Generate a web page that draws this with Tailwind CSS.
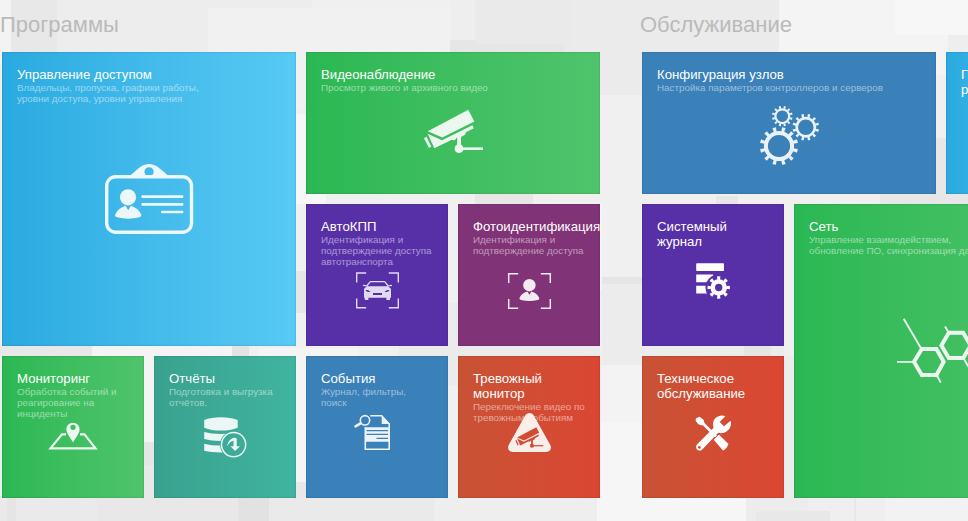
<!DOCTYPE html>
<html lang="ru">
<head>
<meta charset="utf-8">
<title>Программы</title>
<script src="https://cdn.jsdelivr.net/npm/@tailwindcss/browser@4"></script>
</head>
<body class="w-[968px] h-[521px] overflow-hidden bg-[#f0f0f0] font-['Liberation_Sans',Arial,sans-serif] text-white">
<div class="relative isolate w-[968px] h-[521px] overflow-hidden">
<!-- patchwork backdrop -->
<svg class="absolute inset-0 -z-10" width="968" height="521" shape-rendering="crispEdges">
<path fill="#f3f3f3" d="M0 0h11v64H0z"/><path fill="#e8e8e8" d="M11 0h46v60H11z"/><path fill="#ededed" d="M57 0h151v60H57zM208 0h104v8H208z"/><path fill="#f1f1f1" d="M208 8h242v100H208z"/>
<path fill="#eeeeee" d="M450 0h25v40h-25z"/><path fill="#eaeaea" d="M475 0h95v52h-95z"/><path fill="#e6e6e6" d="M450 40h26v4h88v8H450z"/><path fill="#ebebeb" d="M570 0h209v52H642v43h-72z"/>
<path fill="#f4f4f4" d="M779 0h189v75H779z"/><path fill="#f7f7f7" d="M895 0h73v35h-73z"/><path fill="#eeeeee" d="M948 35h20v17h-20z"/>
<path fill="#f7f7f7" d="M296 114h10v56h-10zM296 170h30v34h-30z"/><path fill="#e6e6e6" d="M296 271h10v42h-10z"/>
<path fill="#e7e7e7" d="M475 194h58v10h-58zM716 196h22v8h-22zM880 138h88v66h-88z"/>
<path fill="#e5e5e5" d="M602 277h40v7h-40z"/><path fill="#ececec" d="M602 284h182v81H602z"/><path fill="#f6f6f6" d="M600 422h42v99h-42zM600 204h2v86h-2z"/><path fill="#f3f3f3" d="M600 365h42v57h-42z"/>
<path fill="#e8e8e8" d="M0 346h92v10H0z"/><path fill="#f4f4f4" d="M92 346h140v96H92zM258 348h101v8h-101zM296 356h10v126h-10z"/><path fill="#e3e3e3" d="M232 346h17v10h-17z"/>
<path fill="#ebebeb" d="M448 302h10v44h142v10H399v-10h49zM448 356h10v30h-10z"/><path fill="#e5e5e5" d="M744 346h27v10h-27zM144 442h10v23h-10z"/><path fill="#e8e8e8" d="M144 465h10v33h-10zM296 482h10v16h-10z"/>
<path fill="#ececec" d="M784 356h10v142h-10z"/>
<path fill="#eaeaea" d="M0 498h97v23H0z"/><path fill="#e5e5e5" d="M7 498h9v23H7z"/><path fill="#e8e8e8" d="M97 498h141v23H97z"/><path fill="#e2e2e2" d="M238 498h31v23h-31z"/><path fill="#eaeaea" d="M269 498h165v23H269z"/><path fill="#eeeeee" d="M434 498h163v23H434z"/>
<path fill="#f6f6f6" d="M597 498h149v23H597z"/><path fill="#ececec" d="M746 498h62v23h-62z"/><path fill="#efefef" d="M808 498h77v23h-77z"/><path fill="#e8e8e8" d="M756 511h74v10h-74zM854 498h2v23h-2z"/><path fill="#f2f2f2" d="M885 498h83v23h-83z"/>
</svg>
<svg class="hidden">
<defs>
<g id="camera"><path d="M427.7 131.3 468.3 109.7 474.3 121.5 442.3 137.5z"/><path d="M427.7 133.7 442 140.3 472.5 125.3 473.8 128.2 466 132.2 465 134.8 461 137v9h-3.8v-8.7l-2.4 3-3.5-.4L434.3 148.3z"/><path d="M424 138.2 426.5 136.8 431.3 146.6 429 148z"/><circle cx="459" cy="148.7" r="4.4"/><path d="M460 147.4h23v2.6h-23z"/></g>
</defs>
</svg>
<main class="flex gap-[40px] pl-0.5">
<section class="flex flex-col w-[600px] shrink-0">
<h2 class="h-[52px] pt-3 -ml-0.5 text-[22px] leading-[26px] text-[#bababa]">Программы</h2>
<div class="grid grid-cols-[repeat(4,142px)] grid-rows-[repeat(3,142px)] gap-[10px]">

<article class="col-span-2 row-span-2 grid overflow-hidden bg-linear-to-r from-[#29aae0] to-[#57caf5] shadow-[inset_0_0_2px_rgba(0,0,0,0.25)]">
<div class="col-start-1 row-start-1 p-[15px]"><h3 class="text-[13.2px] leading-[15px]">Управление доступом</h3><p class="text-[9.87px] leading-[11px] text-white/50">Владельцы, пропуска, графики работы,<br>уровни доступа, уровни управления</p></div>
<svg class="col-start-1 row-start-1" width="294" height="294" viewBox="2 52 294 294" fill="#fff" opacity=".9"><rect x="106.7" y="176.7" width="84.8" height="55.6" rx="9" fill="none" stroke="#fff" stroke-width="3.4"/><path fill-rule="evenodd" d="M128.5 176.500c4-2 7-6 12-9.700 6-3.800 11-3.800 17 0 5 3.700 8 6.700 11.500 9.700zM149 167.200a4.600 4.600 0 1 0 .1 0z"/><circle cx="128" cy="197.300" r="8.100"/><path d="M125.500 205.800l2.800 4.500 2.500-4.500c5 1.500 8.500 4.500 10.400 8.800.5 1.500-.5 2.200-2 2.600-7 1.900-15 1.900-22 0-1.700-.4-2.600-1.300-2-2.600 2-4.300 5.600-7.300 10.300-8.800z"/><path d="M142.600 196.700h39.500M142.600 204.400h39.500M162.300 212h19.800" stroke="#fff" stroke-width="2.700" stroke-linecap="round"/></svg>
</article>

<article class="col-span-2 grid overflow-hidden bg-linear-to-r from-[#2ab853] to-[#4fc46c] shadow-[inset_0_0_2px_rgba(0,0,0,0.25)]">
<div class="col-start-1 row-start-1 p-[15px]"><h3 class="text-[13.2px] leading-[15px]">Видеонаблюдение</h3><p class="text-[9.87px] leading-[11px] text-white/50">Просмотр живого и архивного видео</p></div>
<svg class="col-start-1 row-start-1" width="294" height="142" viewBox="306 52 294 142" fill="#fff" opacity=".9"><use href="#camera"/></svg>
</article>

<article class="grid overflow-hidden bg-[#5730a8] shadow-[inset_0_0_2px_rgba(0,0,0,0.25)]">
<div class="col-start-1 row-start-1 p-[15px] whitespace-nowrap"><h3 class="text-[13.2px] leading-[15px]">АвтоКПП</h3><p class="text-[9.87px] leading-[11px] text-white/50">Идентификация и<br>подтверждение доступа<br>автотранспорта</p></div>
<svg class="col-start-1 row-start-1" width="142" height="142" viewBox="306 204 142 142" fill="#fff" opacity=".82"><path d="M356.700 282.500v-9.500h9.500M388.800 273h9.500v9.500M398.300 298.500v9.200h-9.500M366.200 307.700h-9.500v-9.200" fill="none" stroke="#fff" stroke-width="1.400"/><path fill-rule="evenodd" d="M364 289.500c0-1.500 2-2.500 3-3l-4-.6c-.6-1.200 1.700-1.400 3.200-.4l3-3.600c.5-.7 1-.9 2-.9h12.600c1 0 1.500.2 2 .9l3 3.600c1.500-1 3.800-.8 3.200.4l-4 .6c1 .5 3 1.500 3 3v8.300h-1v2.200h-3.600v-2.200h-18v2.200h-3.600v-2.200H364zM370.500 282.300l-3 4h20l-3-4zM365.500 290c2 0 3.500.3 5 1.800-2 .4-4 .3-5-1.800zM389.500 290c-2 0-3.500.3-5 1.800 2 .4 4 .3 5-1.800zM373 293v2h9v-2z"/></svg>
</article>

<article class="grid overflow-hidden bg-[#813377] shadow-[inset_0_0_2px_rgba(0,0,0,0.25)]">
<div class="col-start-1 row-start-1 p-[15px] whitespace-nowrap"><h3 class="text-[13.2px] leading-[15px]">Фотоидентификация</h3><p class="text-[9.87px] leading-[11px] text-white/50">Идентификация и<br>подтверждение доступа</p></div>
<svg class="col-start-1 row-start-1" width="142" height="142" viewBox="458 204 142 142" fill="#fff" opacity=".9"><path d="M508.700 283v-9.300h9.500M540.800 273.700h9.500v9.300M550.300 299v9.300h-9.500M518.200 308.300h-9.500V299" fill="none" stroke="#fff" stroke-width="1.500"/><circle cx="529.400" cy="285.200" r="6.200"/><path d="M527.400 291.500l2 3.300 2-3.300c4 1 6.500 3.400 7.800 6.600.3 1.100-.3 1.600-1.500 1.900-5.500 1.400-11.200 1.400-16.700 0-1.200-.3-1.800-.9-1.500-1.900 1.300-3.200 3.900-5.600 7.900-6.600z"/></svg>
</article>

<article class="grid overflow-hidden bg-linear-to-r from-[#2ab853] to-[#4fc46c] shadow-[inset_0_0_2px_rgba(0,0,0,0.25)]">
<div class="col-start-1 row-start-1 p-[15px] whitespace-nowrap"><h3 class="text-[13.2px] leading-[15px]">Мониторинг</h3><p class="text-[9.87px] leading-[11px] text-white/50">Обработка событий и<br>реагирование на<br>инциденты</p></div>
<svg class="col-start-1 row-start-1" width="142" height="142" viewBox="2 356 142 142" fill="#fff" opacity=".9"><path d="M66 434.300h-4L50.500 448.300h45L84.500 434.300H80" fill="none" stroke="#fff" stroke-width="2.200"/><path fill-rule="evenodd" d="M73 422.800c4 0 6.600 3 6.600 6.400 0 4.500-4.300 8.800-6.600 13.300-2.300-4.500-6.600-8.800-6.600-13.300 0-3.400 2.600-6.400 6.600-6.400zM73 424.700a2.700 2.700 0 1 0 .1 0z"/></svg>
</article>

<article class="grid overflow-hidden bg-linear-to-r from-[#39a28f] to-[#40b49f] shadow-[inset_0_0_2px_rgba(0,0,0,0.25)]">
<div class="col-start-1 row-start-1 p-[15px] whitespace-nowrap"><h3 class="text-[13.2px] leading-[15px]">Отчёты</h3><p class="text-[9.87px] leading-[11px] text-white/50">Подготовка и выгрузка<br>отчётов.</p></div>
<svg class="col-start-1 row-start-1" width="142" height="142" viewBox="154 356 142 142" fill="#fff"><g fill="#ecf6f4"><path d="M204.200 420c9-3.700 24-3.700 33.500 0v7.700c-9.500 3.800-24.500 3.800-33.500 0z"/><path d="M204.200 432c9 2.500 24 2.500 33.500 0v7c-9.500 2.500-24.500 2.500-33.500 0zM204.200 443.700c9 2.500 24 2.500 33.500 0v7c-9.500 2.300-24.500 2.300-33.500 0z"/></g><circle cx="233.600" cy="444.600" r="13.600" fill="#3dab97"/><circle cx="233.600" cy="444.600" r="12.100" fill="none" stroke="#ecf6f4" stroke-width="1.500"/><path fill="#ecf6f4" d="M227 446.500c1.200-5.500 4-8.500 7.500-8.700 1.600 0 2.300.6 2.300 2v6.400h3.200l-4.900 4.900-4.700-4.900h3.100v-5.400c-2.600.3-4.600 2.300-6.500 5.700z"/></svg>
</article>

<article class="grid overflow-hidden bg-[#3a80b9] shadow-[inset_0_0_2px_rgba(0,0,0,0.25)]">
<div class="col-start-1 row-start-1 p-[15px] whitespace-nowrap"><h3 class="text-[13.2px] leading-[15px]">События</h3><p class="text-[9.87px] leading-[11px] text-white/50">Журнал, фильтры,<br>поиск</p></div>
<svg class="col-start-1 row-start-1" width="142" height="142" viewBox="306 356 142 142" fill="#fff" opacity=".9"><path d="M365.300 427v22.200h23.900V424l-7.500-8.200h-11.500" fill="none" stroke="#fff" stroke-width="1.600"/><path d="M381.700 415.300l8.300 8.700h-8.300z"/><path fill-rule="evenodd" d="M365 427.200h24.600v14.600H365zM366.500 430v1.200h21.700V430zM366.500 433.800v1.200h21.700v-1.200zM376.500 437.800v1.200h11.700v-1.200z"/><circle cx="365" cy="420.300" r="4.700" fill="none" stroke="#fff" stroke-width="1.600"/><path d="M360.500 423.300l-5 3" stroke="#fff" stroke-width="2.600" stroke-linecap="round"/></svg>
</article>

<article class="grid overflow-hidden bg-linear-to-r from-[#c85235] to-[#db4632] shadow-[inset_0_0_2px_rgba(0,0,0,0.25)]">
<div class="col-start-1 row-start-1 p-[15px] whitespace-nowrap"><h3 class="text-[13.2px] leading-[15px]">Тревожный<br>монитор</h3><p class="text-[9.87px] leading-[11px] text-white/50">Переключение видео по<br>тревожным событиям</p></div>
<svg class="col-start-1 row-start-1" width="142" height="142" viewBox="458 356 142 142"><path fill="#faeeeb" d="M529.500 413c1.900 0 3.300.9 4.300 2.600L550.300 445c1.700 3.400-.2 7-4 7h-33.600c-3.800 0-5.700-3.600-4-7l16.500-29.400c1-1.700 2.400-2.600 4.300-2.600z"/><use href="#camera" transform="translate(313.9 375.100) scale(.475)" fill="#d24c34"/></svg>
</article>
</div>
</section>

<section class="flex flex-col w-[446px] shrink-0">
<h2 class="h-[52px] pt-3 -ml-0.5 text-[22px] leading-[26px] text-[#bababa]">Обслуживание</h2>
<div class="grid grid-cols-[repeat(3,142px)] grid-rows-[repeat(3,142px)] gap-[10px]">

<article class="col-span-2 grid overflow-hidden bg-[#3a80b9] shadow-[inset_0_0_2px_rgba(0,0,0,0.25)]">
<div class="col-start-1 row-start-1 p-[15px] whitespace-nowrap"><h3 class="text-[13.2px] leading-[15px]">Конфигурация узлов</h3><p class="text-[9.87px] leading-[11px] text-white/50">Настройка параметров контроллеров и серверов</p></div>
<svg class="col-start-1 row-start-1" width="294" height="142" viewBox="642 52 294 142" fill="none" stroke="#eaf1f7">
<circle cx="782.300" cy="116.200" r="6.900" stroke-width="2.200"/><circle cx="782.300" cy="116.200" r="8.900" stroke-width="2.800" pathLength="12" stroke-dasharray=".4 .6" stroke-dashoffset="-.3"/>
<circle cx="805.800" cy="127.200" r="9.100" stroke-width="2.700"/><circle cx="805.800" cy="127.200" r="11.600" stroke-width="3.400" pathLength="12" stroke-dasharray=".38 .62" stroke-dashoffset="-.31"/>
<circle cx="779" cy="146" r="13.100" stroke-width="4"/><circle cx="779" cy="146" r="16.800" stroke-width="4.600" pathLength="12" stroke-dasharray=".36 .64" stroke-dashoffset="-.32"/></svg>
</article>

<article class="grid overflow-hidden bg-linear-to-r from-[#29aae0] to-[#57caf5] shadow-[inset_0_0_2px_rgba(0,0,0,0.25)]">
<div class="p-[15px] whitespace-nowrap"><h3 class="text-[13.2px] leading-[15px]">П<br>р</h3></div>
</article>

<article class="grid overflow-hidden bg-[#5730a8] shadow-[inset_0_0_2px_rgba(0,0,0,0.25)]">
<div class="col-start-1 row-start-1 p-[15px] whitespace-nowrap"><h3 class="text-[13.2px] leading-[15px]">Системный<br>журнал</h3></div>
<svg class="col-start-1 row-start-1" width="142" height="142" viewBox="642 204 142 142" fill="#fff"><rect x="696.200" y="263.300" width="27.800" height="7.800" rx=".8"/><path d="M696.200 274.400h17v7.800h-17zM696.200 285.700h14v7.700h-14z"/><circle cx="718.700" cy="287.500" r="13.200" fill="#5730a8"/><circle cx="718.700" cy="287.500" r="6" fill="none" stroke="#fff" stroke-width="4.600"/><circle cx="718.700" cy="287.500" r="9.400" fill="none" stroke="#fff" stroke-width="3.600" pathLength="8" stroke-dasharray=".42 .58" stroke-dashoffset=".21"/></svg>
</article>

<article class="col-span-2 row-span-2 grid overflow-hidden bg-linear-to-r from-[#2ab853] to-[#4fc46c] shadow-[inset_0_0_2px_rgba(0,0,0,0.25)]">
<div class="col-start-1 row-start-1 p-[15px] whitespace-nowrap"><h3 class="text-[13.2px] leading-[15px]">Сеть</h3><p class="text-[9.87px] leading-[11px] text-white/50">Управление взаимодействием,<br>обновление ПО, синхронизация данных</p></div>
<svg class="col-start-1 row-start-1" width="294" height="294" viewBox="794 204 294 294" fill="none" stroke="#fff" opacity=".9"><path stroke-width="4" d="M914 361.700 921.800 348.900H936.500L943.700 361.700 936.500 374.900H921.800zM941.400 345.400 948.800 332.700H963.200L970.600 345.400 963.200 358.100H948.800z"/><path stroke-width="1.900" d="M903.700 318.700 920.700 347.700M897 361.900H913M936.700 375 940.700 382.500M945 326.500 948 331.500M964 359 969.500 368.500"/></svg>
</article>

<article class="grid overflow-hidden bg-linear-to-r from-[#c85235] to-[#db4632] shadow-[inset_0_0_2px_rgba(0,0,0,0.25)]">
<div class="col-start-1 row-start-1 p-[15px] whitespace-nowrap"><h3 class="text-[13.2px] leading-[15px]">Техническое<br>обслуживание</h3></div>
<svg class="col-start-1 row-start-1" width="142" height="142" viewBox="642 356 142 142" fill="#fff"><path d="M700.500 421 717 437.500" stroke="#fff" stroke-width="2.600"/><path d="M696 418.200 699.500 416.800 703.500 419.700 704.500 423.500 702 425.500 698.300 424.300 695.600 420.700z"/><path d="M713.500 439.500 718.800 434.500 728.300 443.700C729 445 724.500 450.500 723 450.500z"/><path d="M713 439.800 719 434" stroke="#d24c34" stroke-width="1"/><path fill-rule="evenodd" d="M725.300 416.200C719.500 413.800 713 418 713 424.300c0 1.300.2 2.400.6 3.500L697 444.500c-2.800 3.500 1.300 7.700 4.800 5.500L718.200 432.800c6.400 1.800 12.800-3 12.800-9.300 0-1-.2-1.900-.5-2.700L724 426.200 719.700 422zM699.300 446a1.400 1.400 0 1 0 .1 0z"/></svg>
</article>
</div>
</section>
</main>
</div>
</body>
</html>
